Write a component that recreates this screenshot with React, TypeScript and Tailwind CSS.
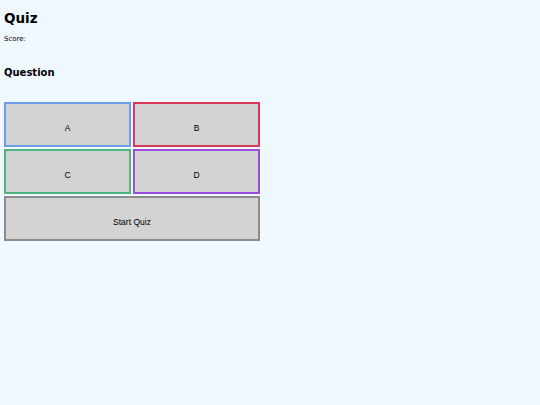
import React, { useState } from 'react';

const options = [
  { label: 'A', border: 'border-[#6f9be8]' },
  { label: 'B', border: 'border-[#d8385a]' },
  { label: 'C', border: 'border-[#4fb47f]' },
  { label: 'D', border: 'border-[#9a4fdc]' },
];

const App: React.FC = () => {
  const [score] = useState<string>('');

  return (
    <div className="min-h-[405px] w-full bg-[#f0f8ff] pl-[4px] pt-[9px] font-['DejaVu_Sans',sans-serif] text-black">
      <h1 className="text-[13.5px] font-bold leading-[18px]">Quiz</h1>
      <p className="mt-[8px] text-[7px] leading-[9px]">Score: {score}</p>
      <h2 className="mt-[22px] text-[10px] font-bold leading-[13px]">Question</h2>

      <div className="mt-[23px] grid w-[256px] grid-cols-2 gap-[2px]">
        {options.map((o) => (
          <button
            key={o.label}
            className={`h-[45px] border-2 ${o.border} bg-[#d3d3d3] pt-[8px] font-['Liberation_Sans',sans-serif] text-[8.5px]`}
          >
            {o.label}
          </button>
        ))}
        <button className="col-span-2 h-[45px] border-2 border-[#8c8c8c] bg-[#d3d3d3] pt-[8px] font-['Liberation_Sans',sans-serif] text-[8.5px]">
          Start Quiz
        </button>
      </div>
    </div>
  );
};

export default App;
